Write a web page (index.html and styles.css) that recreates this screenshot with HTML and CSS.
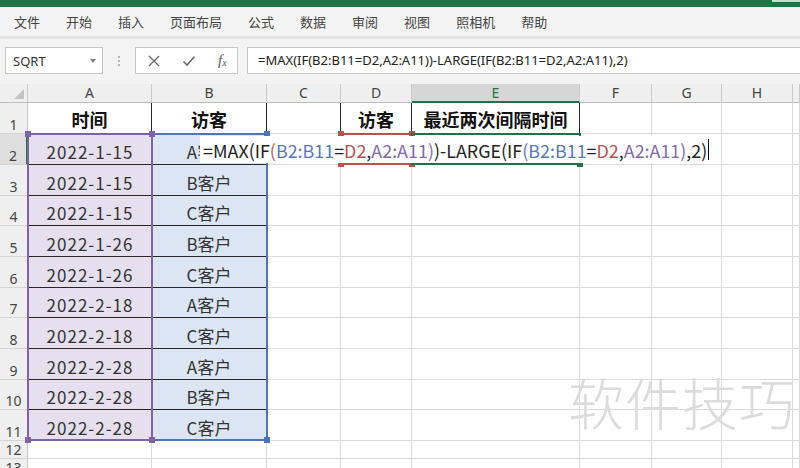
FILE: index.html
```html
<!DOCTYPE html>
<html lang="zh-CN">
<head>
<meta charset="utf-8">
<title>Excel</title>
<link rel="stylesheet" href="styles.css">
</head>
<body>
<div class="app">
  <div class="topbar"><span class="topbar-btn"></span></div>
  <nav class="tabs">
    <span>文件</span><span>开始</span><span>插入</span><span>页面布局</span><span>公式</span><span>数据</span><span>审阅</span><span>视图</span><span>照相机</span><span>帮助</span>
  </nav>
  <div class="tabsep"></div>
  <div class="fbar">
    <div class="namebox"><span>SQRT</span><span class="dd"></span></div>
    <div class="dots"><i></i><i></i><i></i></div>
    <div class="fxbox">
      <svg class="ico-x" width="12" height="12" viewBox="0 0 12 12"><path d="M1 1L11 11M11 1L1 11" stroke="#6b6b6b" stroke-width="1.3" fill="none"/></svg>
      <svg class="ico-ok" width="14" height="12" viewBox="0 0 14 12"><path d="M1.5 6.5L5 10L12.5 1.5" stroke="#6b6b6b" stroke-width="1.6" fill="none"/></svg>
      <span class="fx">f<sub>x</sub></span>
    </div>
    <div class="finput">=MAX(IF(B2:B11=D2,A2:A11))-LARGE(IF(B2:B11=D2,A2:A11),2)</div>
  </div>
  <div class="sheet">
    <div class="grid">
      <div class="ch corner"><span class="tri"></span></div><div class="ch">A</div><div class="ch">B</div><div class="ch">C</div><div class="ch">D</div><div class="ch sel">E</div><div class="ch">F</div><div class="ch">G</div><div class="ch">H</div><div class="ch"></div>

      <div class="rh">1</div><div class="c tb hd">时间</div><div class="c tb hd">访客</div><div class="c br"></div><div class="c tb hd">访客</div><div class="c tb hd">最近两次间隔时间</div><div class="c"></div><div class="c"></div><div class="c"></div><div class="c"></div>

      <div class="rh sel">2</div><div class="c tb pa">2022-1-15</div><div class="c tb pb">A客户</div><div class="c br"></div><div class="c tb"></div><div class="c tb"></div><div class="c"></div><div class="c"></div><div class="c"></div><div class="c"></div>

      <div class="rh">3</div><div class="c tb pa">2022-1-15</div><div class="c tb pb">B客户</div><div class="c"></div><div class="c"></div><div class="c"></div><div class="c"></div><div class="c"></div><div class="c"></div><div class="c"></div>

      <div class="rh">4</div><div class="c tb pa">2022-1-15</div><div class="c tb pb">C客户</div><div class="c"></div><div class="c"></div><div class="c"></div><div class="c"></div><div class="c"></div><div class="c"></div><div class="c"></div>

      <div class="rh">5</div><div class="c tb pa">2022-1-26</div><div class="c tb pb">B客户</div><div class="c"></div><div class="c"></div><div class="c"></div><div class="c"></div><div class="c"></div><div class="c"></div><div class="c"></div>

      <div class="rh">6</div><div class="c tb pa">2022-1-26</div><div class="c tb pb">C客户</div><div class="c"></div><div class="c"></div><div class="c"></div><div class="c"></div><div class="c"></div><div class="c"></div><div class="c"></div>

      <div class="rh">7</div><div class="c tb pa">2022-2-18</div><div class="c tb pb">A客户</div><div class="c"></div><div class="c"></div><div class="c"></div><div class="c"></div><div class="c"></div><div class="c"></div><div class="c"></div>

      <div class="rh">8</div><div class="c tb pa">2022-2-18</div><div class="c tb pb">C客户</div><div class="c"></div><div class="c"></div><div class="c"></div><div class="c"></div><div class="c"></div><div class="c"></div><div class="c"></div>

      <div class="rh">9</div><div class="c tb pa">2022-2-28</div><div class="c tb pb">A客户</div><div class="c"></div><div class="c"></div><div class="c"></div><div class="c"></div><div class="c"></div><div class="c"></div><div class="c"></div>

      <div class="rh">10</div><div class="c tb pa">2022-2-28</div><div class="c tb pb">B客户</div><div class="c"></div><div class="c"></div><div class="c"></div><div class="c"></div><div class="c"></div><div class="c"></div><div class="c"></div>

      <div class="rh">11</div><div class="c tb pa">2022-2-28</div><div class="c tb pb">C客户</div><div class="c"></div><div class="c"></div><div class="c"></div><div class="c"></div><div class="c"></div><div class="c"></div><div class="c"></div>

      <div class="rh">12</div><div class="c"></div><div class="c"></div><div class="c"></div><div class="c"></div><div class="c"></div><div class="c"></div><div class="c"></div><div class="c"></div><div class="c"></div>

      <div class="rh">13</div><div class="c"></div><div class="c"></div><div class="c"></div><div class="c"></div><div class="c"></div><div class="c"></div><div class="c"></div><div class="c"></div><div class="c"></div>
    </div>

    <div class="rng rng-b"><i class="k tl"></i><i class="k tr"></i><i class="k bl"></i><i class="k br2"></i></div>
    <div class="rng rng-a"><i class="k tl"></i><i class="k tr"></i><i class="k bl"></i><i class="k br2"></i></div>
    <div class="rng rng-d"><i class="k tl"></i><i class="k tr"></i><i class="k bl"></i><i class="k br2"></i></div>
    <div class="rng rng-e"><i class="k br2"></i></div>

    <div class="editor"><span class="dk">=MAX(IF</span><span class="p1">(</span><span class="rb">B2:B11</span><span class="dk">=</span><span class="rr">D2</span><span class="dk">,</span><span class="rp">A2:A11</span><span class="rp">)</span><span class="dk">)-LARGE(IF</span><span class="rb">(</span><span class="rb">B2:B11</span><span class="dk">=</span><span class="rr">D2</span><span class="dk">,</span><span class="rp">A2:A11</span><span class="rp">)</span><span class="dk">,2)</span><span class="caret"></span></div>
  </div>
  <div class="watermark">软件技巧</div>
</div>
</body>
</html>
```

FILE: styles.css
```css
html, body {
  margin: 0;
  padding: 0;
}
body {
  width: 800px;
  height: 468px;
  overflow: hidden;
  background: #ffffff;
  font-family: "Noto Sans CJK SC", "Noto Sans", sans-serif;
}
.app {
  position: relative;
  width: 800px;
  height: 468px;
  overflow: hidden;
}

/* title strip */
.topbar {
  position: relative;
  height: 7px;
  background: #217346;
}
.topbar-btn {
  position: absolute;
  right: 0;
  top: 0;
  width: 28px;
  height: 2px;
  background: #c9dccf;
}

/* ribbon tabs */
.tabs {
  height: 29px;
  background: #f3f3f3;
  display: flex;
  align-items: center;
  gap: 26px;
  padding-left: 14px;
  font-size: 13px;
  color: #444;
  line-height: 1;
}
.tabsep {
  height: 3px;
  background: #e2e2e2;
}

/* formula bar */
.fbar {
  height: 45px;
  box-sizing: border-box;
  background: #f3f3f3;
  display: flex;
  align-items: flex-start;
  padding-top: 8px;
}
.namebox {
  margin-left: 5px;
  width: 98px;
  height: 27px;
  box-sizing: border-box;
  border: 1px solid #c6c6c6;
  background: #fff;
  display: flex;
  align-items: center;
  padding-left: 7px;
  font-family: "Noto Sans", sans-serif;
  font-size: 13px;
  color: #333;
}
.dd {
  margin-left: auto;
  margin-right: 6px;
  width: 0;
  height: 0;
  border-top: 4px solid #808080;
  border-left: 3.5px solid transparent;
  border-right: 3.5px solid transparent;
}
.dots {
  width: 32px;
  height: 27px;
  display: flex;
  flex-direction: column;
  align-items: center;
  justify-content: center;
  gap: 2px;
}
.dots i {
  width: 2px;
  height: 2px;
  background: #b5b5b5;
}
.fxbox {
  width: 103px;
  height: 27px;
  box-sizing: border-box;
  border: 1px solid #c6c6c6;
  background: #fff;
  display: flex;
  align-items: center;
  padding-left: 12px;
}
.ico-ok {
  margin-left: 22px;
}
.fx {
  margin-left: 22px;
  font-family: "Liberation Serif", serif;
  font-style: italic;
  font-size: 15px;
  color: #555;
  line-height: 1;
}
.fx sub {
  font-size: 10px;
  vertical-align: -1px;
}
.finput {
  margin-left: 9px;
  flex: 1;
  height: 27px;
  box-sizing: border-box;
  border: 1px solid #c6c6c6;
  border-right: none;
  background: #fff;
  padding-left: 10px;
  font-family: "Noto Sans", sans-serif;
  font-size: 13px;
  line-height: 25px;
  color: #222;
  white-space: nowrap;
}

/* sheet */
.sheet {
  position: relative;
}
.grid {
  display: grid;
  grid-template-columns: 28px 124px 115px 74px 71px 168px 72px 70px 71px 1fr;
  grid-template-rows: 19px 31px 31px 31px 30px 31px 31px 30px 31px 31px 30px 31px 18px 18px;
}
.ch {
  background: #efefef;
  border-right: 1px solid #c9c9c9;
  border-bottom: 1px solid #bdbdbd;
  box-sizing: border-box;
  display: flex;
  align-items: center;
  justify-content: center;
  font-family: "Noto Sans", sans-serif;
  font-size: 14px;
  color: #444;
  line-height: 1;
}
.ch.sel {
  background: #d6d6d6;
  color: #217346;
  border-bottom: 2px solid #217346;
}
.corner {
  position: relative;
}
.tri {
  position: absolute;
  right: 3px;
  bottom: 3px;
  width: 0;
  height: 0;
  border-left: 10px solid transparent;
  border-bottom: 10px solid #c4c4c4;
}
.rh {
  background: #efefef;
  border-right: 1px solid #c4c4c4;
  border-bottom: 1px solid #d4d4d4;
  box-sizing: border-box;
  display: flex;
  align-items: flex-end;
  justify-content: center;
  font-family: "Noto Sans", sans-serif;
  font-size: 14px;
  color: #444;
  line-height: 1;
  padding-bottom: 1px;
}
.rh.sel {
  background: #dedede;
  border-right: 2px solid #217346;
}
.c {
  border-right: 1px solid #dadada;
  border-bottom: 1px solid #dadada;
  box-sizing: border-box;
  display: flex;
  align-items: flex-end;
  justify-content: center;
  font-size: 17px;
  color: #333;
  line-height: 1;
  padding-bottom: 4px;
  white-space: nowrap;
}
.c.tb {
  border-right-color: #262626;
  border-bottom-color: #262626;
}
.c.br {
  border-right-color: #262626;
}
.c.hd {
  font-weight: 700;
  font-size: 18px;
  color: #111;
  padding-bottom: 5px;
}
.c.pa {
  background: #e5dfee;
  letter-spacing: 1px;
  padding-left: 1px;
}
.c.pb {
  background: #dbe5f4;
}

/* reference highlights */
.rng {
  position: absolute;
  box-sizing: border-box;
  border: 2px solid;
}
.rng-a {
  left: 27px;
  top: 49px;
  width: 126px;
  height: 308px;
  border-color: #8062a6;
  color: #8062a6;
}
.rng-b {
  left: 151px;
  top: 49px;
  width: 117px;
  height: 308px;
  border-color: #4d74b4;
  color: #4d74b4;
}
.rng-d {
  left: 340px;
  top: 49px;
  width: 73px;
  height: 32px;
  border-color: #bf4f4b;
  color: #bf4f4b;
}
.rng-e {
  left: 411px;
  top: 49px;
  width: 170px;
  height: 32px;
  border-color: #217346;
  color: #217346;
}
.k {
  position: absolute;
  width: 6px;
  height: 6px;
  background: currentColor;
}
.k.tl { left: -4px; top: -4px; }
.k.tr { right: -4px; top: -4px; }
.k.bl { left: -4px; bottom: -4px; }
.k.br2 { right: -4px; bottom: -4px; }

/* in-cell editor */
.editor {
  position: absolute;
  left: 200px;
  top: 52px;
  width: 514px;
  height: 27px;
  background: #fff;
  display: flex;
  align-items: flex-end;
  padding-left: 3px;
  padding-bottom: 3px;
  box-sizing: border-box;
  font-size: 17.9px;
  line-height: 1;
  white-space: nowrap;
  color: #222;
}
.dk { color: #222; }
.p1 { color: #b7636d; }
.rb { color: #5879b8; }
.rr { color: #b9524e; }
.rp { color: #8568a8; }
.caret {
  display: inline-block;
  width: 1px;
  height: 21px;
  margin-left: 1px;
  background: #000;
}

.watermark {
  position: absolute;
  left: 568px;
  top: 367px;
  font-size: 56px;
  font-weight: 300;
  color: #dcdcdc;
  letter-spacing: 1px;
  line-height: 1.2;
}
```
